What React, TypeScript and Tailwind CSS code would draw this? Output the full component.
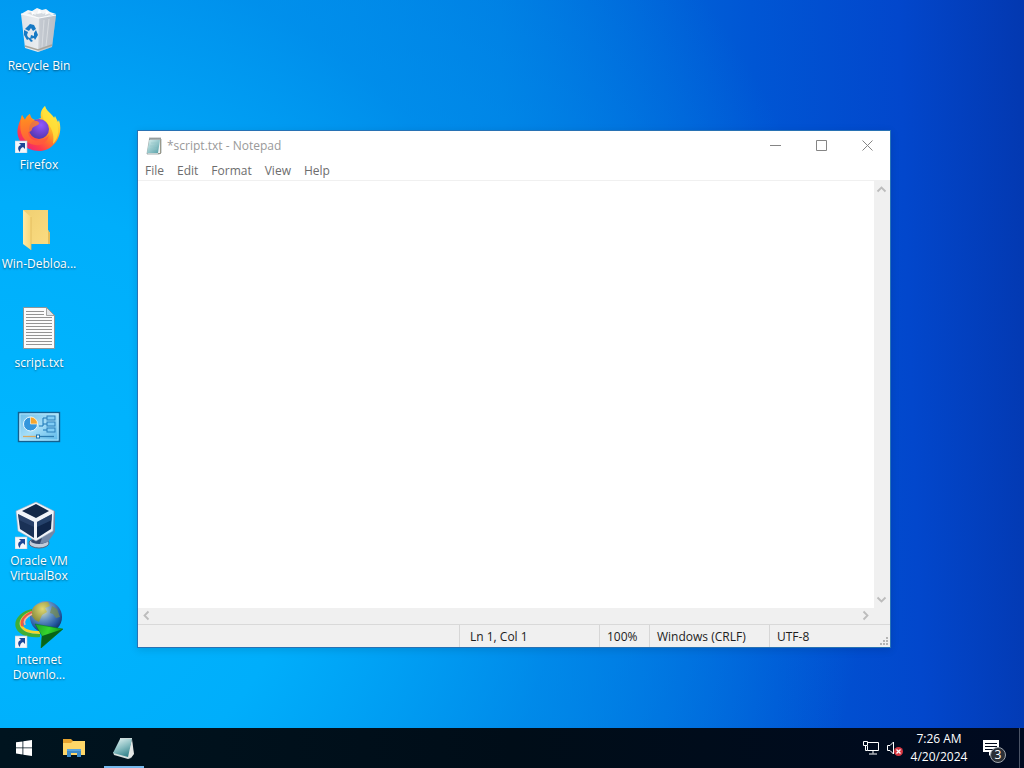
import React, { useState } from "react";

function ShortcutArrow() {
  return (
    <g>
      <rect x="0" y="36" width="12" height="12" fill="#f4f7fb" stroke="#b9c6d8" strokeWidth="0.6" />
      <path d="M4 38h6v6l-2-2c-2 1-3 2-3 5-3-3-2-6 1-7z" fill="#1d4796" />
    </g>
  );
}

function RecycleBinIcon() {
  return (
    <svg viewBox="0 0 48 48" className="size-12" aria-hidden="true">
      <defs>
        <linearGradient id="bin" x1="0" x2="1">
          <stop offset="0" stopColor="#dfe3e8" />
          <stop offset="0.5" stopColor="#e9ecef" />
          <stop offset="0.56" stopColor="#c9ced5" />
          <stop offset="1" stopColor="#b3bac3" />
        </linearGradient>
      </defs>
      <path d="M6 8l7-4 4 1 5-3 5 2 4-1 4 3 6 2-17 5z" fill="#f3f5f7" />
      <path d="M12 7l5-1 3 3 5-4 3 3 5-2 3 3-12 3z" fill="#d3d9df" />
      <path d="M16 5l4 2-3 2zM24 3l3 4-5 1zM31 5l4 2-5 2z" fill="#fff" />
      <path d="M6 8l18 4 17-3-4 32-14 5-13-4z" fill="url(#bin)" />
      <path d="M24 12l17-3-4 32-14 5z" fill="#bfc5cc" fillOpacity="0.55" />
      <path d="M6 8l18 4 17-3" fill="none" stroke="#fafbfc" strokeWidth="1.2" />
      <path d="M10 40l13 4 14-5" fill="none" stroke="#a9a49a" strokeWidth="1.4" />
      <path d="M29 14l-2 27M34 13l-3 27" stroke="#dde1e5" strokeWidth="0.8" />
      <g fill="#1679c4">
        <path d="M12 21l3-3 4 1 2 4-3 2-2-3-2 3-4-2z" />
        <path d="M9 24l4 2-1 3 2 4-2 1-3-5z" />
        <path d="M21 24l2 5-3 5-1-2-4 1 1-4 3 1v-3z" />
        <path d="M12 31l3 1 3 3-2 1z" />
      </g>
    </svg>
  );
}

function FirefoxIcon() {
  return (
    <svg viewBox="0 0 48 48" className="size-12" aria-hidden="true">
      <defs>
        <linearGradient id="fx" x1="0.85" y1="0.1" x2="0.2" y2="0.95">
          <stop offset="0" stopColor="#fff44f" />
          <stop offset="0.3" stopColor="#ffc52b" />
          <stop offset="0.55" stopColor="#ff7a2a" />
          <stop offset="0.8" stopColor="#ff3b4d" />
          <stop offset="1" stopColor="#e9237e" />
        </linearGradient>
        <linearGradient id="fx2" x1="0" y1="0" x2="0.6" y2="1">
          <stop offset="0" stopColor="#ff9a1a" />
          <stop offset="1" stopColor="#ff5a3c" />
        </linearGradient>
        <radialGradient id="globe" cx="0.6" cy="0.3" r="0.8">
          <stop offset="0" stopColor="#9059ff" />
          <stop offset="0.6" stopColor="#6a3fc8" />
          <stop offset="1" stopColor="#433aa5" />
        </radialGradient>
      </defs>
      <path d="M30 1c1 5 6 7 9 12l1-2c1 2 2 4 3 6l1-2c5 15-5 31-20 31C9 46 0 34 3 22c1-5 3-8 4-12l3 5c1-3 3-5 5-6 0 3 2 5 5 6l6-2c-1-4 0-9 4-12z" fill="url(#fx)" />
      <path d="M30 1c1 5 7 8 10 13 5 9 4 19-2 25 1-6 1-15-7-22-5-4-4-12-1-16z" fill="#ffe23b" fillOpacity="0.8" />
      <circle cx="24" cy="24" r="10" fill="url(#globe)" />
      <path d="M7 10l3 5c1-3 3-5 5-6 0 3 2 6 6 7 2 0 4 2 3 3-2 2-6 2-7 5 0 2-2 3-4 3 1 7 7 10 12 8 4-1 7-2 9-5-2 9-10 12-18 9C6 35 3 24 7 10z" fill="url(#fx2)" fillOpacity="0.85" />
      <ShortcutArrow />
    </svg>
  );
}

function FolderIcon() {
  return (
    <svg viewBox="0 0 48 48" className="size-12" aria-hidden="true">
      <defs>
        <linearGradient id="folder" x1="0" x2="1" y2="1">
          <stop offset="0" stopColor="#f0cf72" />
          <stop offset="1" stopColor="#fbdc81" />
        </linearGradient>
        <linearGradient id="flap" x1="0" x2="1">
          <stop offset="0" stopColor="#ffe9a6" />
          <stop offset="1" stopColor="#f8d879" />
        </linearGradient>
      </defs>
      <path d="M8 6h25v20l2 3v11H14z" fill="url(#folder)" />
      <path d="M33 26l2 3v11h-2z" fill="#e5bc58" />
      <path d="M8 6l8 7v33l-8-6z" fill="url(#flap)" />
      <path d="M16 13v33" stroke="#e1b95b" strokeWidth="0.8" />
    </svg>
  );
}

function TextFileIcon() {
  return (
    <svg viewBox="0 0 48 48" className="size-12" aria-hidden="true">
      <path d="M8.500 4.500h23l8 8v33h-31z" fill="#fbfbfb" stroke="#8f8f8f" strokeWidth="0.9" />
      <path d="M31.500 4.500v8h8z" fill="#e2e5e8" stroke="#8f8f8f" strokeWidth="0.8" />
      <path d="M11 8.500h18M11 11.500h18M11 14.500h26M11 17.500h26M11 20.500h26M11 23.500h26M11 26.500h26M11 29.500h26M11 32.500h26M11 35.500h26M11 38.500h26M11 41.500h26" stroke="#939393" strokeWidth="1" />
    </svg>
  );
}

function ControlPanelIcon() {
  return (
    <svg viewBox="0 0 48 48" className="size-12" aria-hidden="true">
      <defs>
        <linearGradient id="panel" x1="0" y1="0" x2="1" y2="1">
          <stop offset="0" stopColor="#69bce9" />
          <stop offset="0.5" stopColor="#a5def8" />
          <stop offset="1" stopColor="#55b5e8" />
        </linearGradient>
      </defs>
      <rect x="3.500" y="10.500" width="41" height="29" fill="url(#panel)" stroke="#14608f" strokeWidth="1.400" />
      <rect x="5" y="12" width="38" height="26" fill="none" stroke="#b9eaff" strokeWidth="0.8" />
      <circle cx="15.500" cy="22" r="7" fill="#3496dc" stroke="#e9f8ff" strokeWidth="1" />
      <path d="M15.500 22v-7a7 7 0 0 1 7 7z" fill="#f6a62d" stroke="#fff4d7" strokeWidth="0.7" />
      <path d="M24 24h4v-8h4M28 22h4M28 28h4" fill="none" stroke="#1975b5" strokeWidth="1" />
      <g fill="#7fcdf6" stroke="#2a7fb9" strokeWidth="1">
        <rect x="32" y="14" width="8" height="4" />
        <rect x="32" y="20" width="8" height="4" />
        <rect x="32" y="26" width="8" height="4" />
      </g>
      <path d="M8 34.500h14" stroke="#d9a860" strokeWidth="1.300" />
      <path d="M24 34.500h15" stroke="#2b7cb1" strokeWidth="1.300" />
      <rect x="21.500" y="33" width="3" height="3" fill="#e9faff" stroke="#1e74ad" />
    </svg>
  );
}

function VirtualBoxIcon() {
  return (
    <svg viewBox="0 0 48 48" className="size-12" aria-hidden="true">
      <ellipse cx="24" cy="42" rx="10" ry="5" fill="#c3ccda" stroke="#56647c" />
      <ellipse cx="24" cy="40" rx="8" ry="3" fill="#35486a" />
      <path d="M36 9l4 1v21l-7 10-8 2z" fill="#7487a6" />
      <path d="M21 1l18 9-1 20-17 10L3 30 1 10z" fill="#f1f4f9" stroke="#9aa8bd" strokeWidth="0.6" />
      <path d="M21 3l13 7-13 7-14-7z" fill="#132848" />
      <path d="M3 13l16 8v16L5 28z" fill="#1a3156" />
      <path d="M37 13l-15 8v16l14-9z" fill="#10264a" />
      <path d="M3 13l16 8v5L4 19z" fill="#334d76" fillOpacity="0.6" />
      <path d="M37 13l-15 8v5l15-7z" fill="#3a5b8a" fillOpacity="0.5" />
      <ShortcutArrow />
    </svg>
  );
}

function DownloadManagerIcon() {
  return (
    <svg viewBox="0 0 48 48" className="size-12" aria-hidden="true">
      <defs>
        <radialGradient id="earth" cx="0.4" cy="0.3" r="0.75">
          <stop offset="0" stopColor="#d3dfbb" />
          <stop offset="0.4" stopColor="#6492c3" />
          <stop offset="0.75" stopColor="#23569e" />
          <stop offset="1" stopColor="#0e2a60" />
        </radialGradient>
        <radialGradient id="land" cx="0.6" cy="0.35" r="0.7">
          <stop offset="0" stopColor="#e0d873" />
          <stop offset="1" stopColor="#84893a" />
        </radialGradient>
        <linearGradient id="tri" x1="0" y1="0" x2="1" y2="0.4">
          <stop offset="0" stopColor="#1d9d2c" />
          <stop offset="0.5" stopColor="#35d72e" />
          <stop offset="1" stopColor="#0b8d1c" />
        </linearGradient>
      </defs>
      <circle cx="31" cy="17" r="16" fill="url(#earth)" />
      <path d="M18 8c4-5 10-6 15-6l2 4-5 2 2 4-5 3-3 7-4-2-4-5z" fill="url(#land)" />
      <path d="M37 6l5 3 3 8-4 1-3-4-3-1z" fill="#768b4d" fillOpacity="0.7" />
      <path d="M17 9C5 11-2 21 1 28C4 35 13 38 25 37V34C14 34 7 31 5 26C3 20 9 13 17 11z" fill="#3fae35" />
      <path d="M17 11C9 13 3 20 5 26C7 31 14 34 25 34V31C15 31 9 29 8 25C6 20 11 15 17 12z" fill="#f4d52b" />
      <path d="M17 11C9 14 4 20 6 26L9 27C7 22 11 16 17 13z" fill="#ee5a44" />
      <path d="M17 14C11 17 8 21 10 25" fill="none" stroke="#f6b5a4" strokeWidth="1.500" />
      <path d="M20 24l28 5-22 19 1-12z" fill="url(#tri)" stroke="#08721a" strokeWidth="0.500" />
      <path d="M27 36l21-7-22 19z" fill="#07641a" />
      <ShortcutArrow />
    </svg>
  );
}

function NotepadIcon() {
  return (
    <svg viewBox="0 0 16 18" className="h-[18px] w-4" aria-hidden="true">
      <defs>
        <linearGradient id="note" x1="0" y1="0" x2="1" y2="1">
          <stop offset="0" stopColor="#d8f0ef" />
          <stop offset="1" stopColor="#559fa7" />
        </linearGradient>
      </defs>
      <path d="M3.500 2H15v14l-2 1H1z" fill="#eef4f4" stroke="#7d8f8f" strokeWidth="0.700" />
      <path d="M3.500 3H14l-2 13H1z" fill="url(#note)" />
      <path d="M5 6h7M4 9h7M4 12h7" stroke="#94c7cb" strokeWidth="0.600" />
      <path d="M4 0.500v2M6 0.500v2M8 0.500v2M10 0.500v2M12 0.500v2M14 0.500v2" stroke="#4d5558" strokeWidth="0.900" />
      <path d="M14.500 3v13.500H12" fill="none" stroke="#8f8a78" strokeWidth="0.800" />
    </svg>
  );
}

const shortcuts = [
  { name: "Recycle Bin", lines: ["Recycle Bin"], Icon: RecycleBinIcon },
  { name: "Firefox", lines: ["Firefox"], Icon: FirefoxIcon },
  { name: "Win-Debloa...", lines: ["Win-Debloa..."], Icon: FolderIcon },
  { name: "script.txt", lines: ["script.txt"], Icon: TextFileIcon },
  { name: "Control Panel", lines: [], Icon: ControlPanelIcon },
  { name: "Oracle VM VirtualBox", lines: ["Oracle VM", "VirtualBox"], Icon: VirtualBoxIcon },
  { name: "Internet Downlo...", lines: ["Internet", "Downlo..."], Icon: DownloadManagerIcon },
];

function DesktopIcons() {
  return (
    <ul className="flex w-[78px] flex-col pt-1.5">
      {shortcuts.map(({ name, lines, Icon }) => (
        <li key={name} className="h-[99px]">
          <button
            type="button"
            aria-label={name}
            className="flex w-full flex-col items-center text-[12px] leading-[15px] whitespace-nowrap text-white [text-shadow:0_1px_2px_rgba(0,0,0,0.5)]"
          >
            <span className="mb-1"><Icon /></span>
            {lines.map((line) => (
              <span key={line}>{line}</span>
            ))}
          </button>
        </li>
      ))}
    </ul>
  );
}

function Chevron({ d }: { d: string }) {
  return (
    <svg viewBox="0 0 16 16" className="block size-4" fill="none" stroke="#bcbcbc" strokeWidth="1.800" aria-hidden="true">
      <path d={d} />
    </svg>
  );
}

function NotepadWindow() {
  const [text, setText] = useState("");
  return (
    <section
      aria-label="Notepad"
      className="absolute top-[130px] left-[137px] flex h-[518px] w-[754px] flex-col border border-[#2872b4] bg-white shadow-[0_2px_8px_rgba(0,0,0,0.12)]"
    >
      <header className="flex h-[29px] shrink-0 items-center pl-2">
        <NotepadIcon />
        <h1 className="ml-[5px] flex-1 text-[12px] text-[#999999]">*script.txt - Notepad</h1>
        <div className="flex h-full text-[#858585]">
          {[
            ["Minimize", "M0 5.5h11"],
            ["Maximize", "M0.5 0.5h10v10h-10z"],
            ["Close", "M0.5 0.5l10 10M10.5 0.5l-10 10"],
          ].map(([name, d]) => (
            <button key={name} type="button" aria-label={name} className="flex w-[46px] items-center justify-center">
              <svg viewBox="0 0 11 11" className="size-[11px]" fill="none" stroke="currentColor" aria-hidden="true">
                <path d={d} />
              </svg>
            </button>
          ))}
        </div>
      </header>
      <nav className="flex h-[21px] shrink-0 gap-[13px] border-b border-[#f0f0f0] px-[7px] pt-px text-[12px] text-[#6d6d6d]">
        {["File", "Edit", "Format", "View", "Help"].map((item) => (
          <button key={item} type="button">{item}</button>
        ))}
      </nav>
      <div className="flex min-h-0 flex-1">
        <textarea
          aria-label="Document text"
          value={text}
          onChange={(e) => setText(e.target.value)}
          className="min-w-0 flex-1 resize-none bg-white p-1 text-[14px] outline-none"
        />
        <div className="flex w-4 flex-col items-center justify-between bg-[#f0f0f0]">
          <button type="button" aria-label="Scroll up"><Chevron d="M3.500 10.500l4-4 4 4" /></button>
          <button type="button" aria-label="Scroll down"><Chevron d="M3.500 5.500l4 4 4-4" /></button>
        </div>
      </div>
      <div className="flex h-4 shrink-0 items-center justify-between bg-[#f0f0f0] pr-4">
        <button type="button" aria-label="Scroll left"><Chevron d="M10.500 3.500l-4 4 4 4" /></button>
        <button type="button" aria-label="Scroll right"><Chevron d="M5.500 3.500l4 4-4 4" /></button>
      </div>
      <footer className="flex h-[23px] shrink-0 items-stretch border-t border-[#d9d9d9] bg-[#f0f0f0] text-[12px] leading-6 text-[#1c1c1c]">
        <span className="flex-1" />
        <span className="w-[140px] border-l border-[#d7d7d7] pl-2.5">Ln 1, Col 1</span>
        <span className="w-[50px] border-l border-[#d7d7d7] pl-[7px]">100%</span>
        <span className="w-[120px] border-l border-[#d7d7d7] pl-[7px]">Windows (CRLF)</span>
        <span className="flex w-[121px] justify-between border-l border-[#d7d7d7] pl-[7px]">
          UTF-8
          <svg viewBox="0 0 12 12" className="size-3 self-end" fill="#b5b5b5" aria-hidden="true">
            <path d="M8 2h2v2H8zM5 5h2v2H5zM8 5h2v2H8zM2 8h2v2H2zM5 8h2v2H5zM8 8h2v2H8z" />
          </svg>
        </span>
      </footer>
    </section>
  );
}

function Taskbar() {
  return (
    <footer className="flex h-10 shrink-0 justify-between bg-linear-to-r from-[#00141f] via-[#000d18] to-[#000a20] text-white">
      <div className="flex gap-0.5">
        <button type="button" aria-label="Start" className="flex w-12 items-center justify-center">
          <svg viewBox="0 0 16 16" className="size-4" fill="#ffffff" aria-hidden="true">
            <path d="M0 2.300l6.500-.9v6.100H0zM7.300 1.300L16 0v7.500H7.300zM0 8.300h6.500v6.200L0 13.600zM7.300 8.300H16V16l-8.700-1.300z" />
          </svg>
        </button>
        <button type="button" aria-label="File Explorer" className="flex w-12 items-center justify-center">
          <svg viewBox="0 0 22 18" className="h-[18px] w-[22px]" aria-hidden="true">
            <path d="M0 0h8l2 2h12v14H0z" fill="#e6a32f" />
            <path d="M0 4h8l2-2h12v14H0z" fill="#ffd768" />
            <path d="M4 10h14v8h-4v-4H8v4H4z" fill="#3c8ac9" />
            <path d="M4 10h14v2H4z" fill="#5aa5de" />
          </svg>
        </button>
        <button type="button" aria-label="Notepad" className="flex w-12 flex-col items-center justify-end">
          <svg viewBox="0 0 24 24" className="mb-1.5 size-6" aria-hidden="true">
            <defs>
              <linearGradient id="taskNote" x1="0.2" y1="0" x2="0.7" y2="1">
                <stop offset="0" stopColor="#dcefee" />
                <stop offset="0.5" stopColor="#86bcc0" />
                <stop offset="1" stopColor="#2f7f88" />
              </linearGradient>
            </defs>
            <path d="M20 3l2 15-3 4-4-2z" fill="#e4e8e6" />
            <path d="M1 16l15 3 3 3-3 1-14-4z" fill="#d7e1e0" />
            <path d="M8 3l12 0-4 18-15-4z" fill="url(#taskNote)" />
            <path d="M8 2.500h12" stroke="#cbd8d9" />
          </svg>
          <span className="h-0.5 w-10 bg-[#76b9ed]" />
        </button>
      </div>
      <div className="flex items-center">
        <button type="button" aria-label="Network" className="flex w-6 justify-center">
          <svg viewBox="0 0 16 14" className="h-3.5 w-4" fill="none" stroke="#ffffff" aria-hidden="true">
            <path d="M5 1.500h10.500v8H4.500V5M10 9.500v3M6 13h8M0.500 0.500h4v4h-4zM2.500 4.500v5h2" />
          </svg>
        </button>
        <button type="button" aria-label="Volume muted" className="flex w-6 justify-center">
          <svg viewBox="0 0 16 16" className="size-4" fill="none" aria-hidden="true">
            <path d="M0.500 5.500H3L6.500 2v12L3 10.500H0.500z" stroke="#ffffff" />
            <circle cx="11.500" cy="11.500" r="4.500" fill="#d73742" />
            <path d="M9.500 9.500l4 4M13.500 9.500l-4 4" stroke="#ffffff" strokeWidth="1.300" />
          </svg>
        </button>
        <button type="button" className="flex w-16 flex-col items-center text-[12px] leading-[18px]">
          <span>7:26 AM</span>
          <span>4/20/2024</span>
        </button>
        <button type="button" aria-label="3 notifications" className="relative ml-2 flex h-full w-9 items-center pl-[3px]">
          <svg viewBox="0 0 18 18" className="size-[18px]" aria-hidden="true">
            <path d="M1 1h16v12h-6l-4 4v-4H1z" fill="#ffffff" />
            <path d="M3 4.500h12M3 7.500h12M3 10.500h9" stroke="#00091b" />
          </svg>
          <span className="absolute top-[19px] left-[11px] flex size-4 items-center justify-center rounded-full border border-[#a0a6ad] bg-[#2b3037] text-[12px] leading-none">3</span>
        </button>
        <button type="button" aria-label="Show desktop" className="ml-1 h-full w-[5px] border-l border-[#4b5466]" />
      </div>
    </footer>
  );
}

export default function App() {
  return (
    <div className="flex h-screen flex-col overflow-hidden bg-[#0082e6] font-['Open_Sans','Noto_Sans',sans-serif]">
      <main className="relative min-h-0 flex-1 bg-[radial-gradient(ellipse_85%_120%_at_0%_70%,#00b8ff_0%,#00aefb_35%,rgba(0,150,240,0.6)_65%,transparent_100%),linear-gradient(88deg,#0094ed_0%,#0088e6_25%,#0078df_50%,#0056d4_74%,#0247cc_88%,#0338b0_100%)]">
        <DesktopIcons />
        <NotepadWindow />
      </main>
      <Taskbar />
    </div>
  );
}
